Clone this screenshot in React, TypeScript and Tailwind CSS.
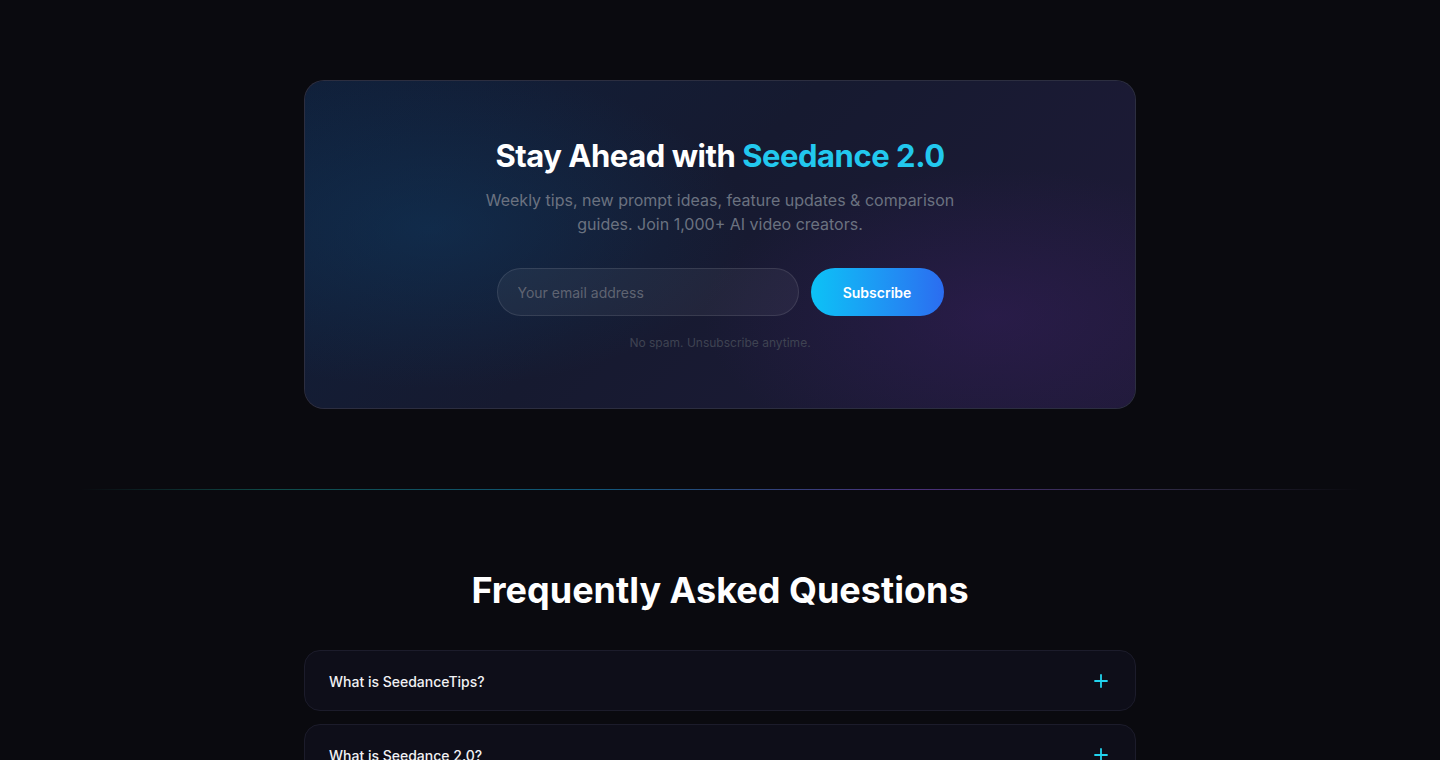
import React from "react";

const faqs = ["What is SeedanceTips?", "What is Seedance 2.0?", "How do I use Seedance prompts?"];

function Plus() {
  return (
    <svg width="14" height="14" viewBox="0 0 14 14" fill="none" className="shrink-0">
      <path d="M7 1v12M1 7h12" stroke="#22d3ee" strokeWidth="1.8" strokeLinecap="round" />
    </svg>
  );
}

export default function App() {
  return (
    <div
      className="min-h-screen bg-[#0a0a0f] text-white"
      style={{ fontFamily: "Inter, 'Noto Sans', sans-serif" }}
    >
      <section className="pt-20 pb-20">
        <div className="relative mx-auto w-[832px] overflow-hidden rounded-[20px] border border-white/10 bg-[#15172b]">
          <div className="pointer-events-none absolute inset-0 bg-[radial-gradient(ellipse_55%_70%_at_15%_45%,rgba(14,60,100,0.45),transparent_70%),radial-gradient(ellipse_50%_65%_at_83%_72%,rgba(60,30,100,0.4),transparent_70%),linear-gradient(135deg,#10203a_0%,#161a30_45%,#1f1a38_100%)]" />
          <div className="relative flex flex-col items-center px-14 pt-[55px] pb-[57px] text-center">
            <h2 className="text-[31px] font-bold leading-10 tracking-[-0.015em]">
              Stay Ahead with <span className="text-[#22c8ee]">Seedance 2.0</span>
            </h2>
            <p className="mt-3 w-[480px] text-[16px] leading-6 text-[#6b7280]">
              Weekly tips, new prompt ideas, feature updates &amp; comparison guides. Join 1,000+ AI video creators.
            </p>
            <div className="mt-8 flex w-[447px] gap-3">
              <input
                placeholder="Your email address"
                className="h-12 flex-1 rounded-full border border-white/10 bg-white/5 px-5 text-[14px] text-white outline-none placeholder:text-[#5f6472]"
              />
              <button className="h-12 w-[133px] rounded-full bg-gradient-to-r from-[#0cc2f6] to-[#2b6cf0] text-[14px] font-semibold text-white">
                Subscribe
              </button>
            </div>
            <p className="mt-[19px] text-[12px] leading-4 text-[#3f4352]">No spam. Unsubscribe anytime.</p>
          </div>
        </div>
      </section>

      <div className="mx-auto h-px w-[1280px] bg-[linear-gradient(90deg,transparent_0%,rgba(20,140,130,0.5)_15%,rgba(20,130,180,0.65)_40%,rgba(110,70,180,0.65)_65%,rgba(90,80,130,0.45)_85%,transparent_100%)]" />

      <section className="pt-20 pb-20">
        <h2 className="text-center text-[36px] font-bold leading-10">Frequently Asked Questions</h2>
        <div className="mx-auto mt-10 flex w-[832px] flex-col gap-[13px]">
          {faqs.map((q) => (
            <div
              key={q}
              className="flex h-[61px] items-center justify-between rounded-2xl border border-[#1c1c2b] bg-[#0e0e19] px-6"
            >
              <span className="pt-[1px] text-[14px] font-medium text-[#f1f1f4]">{q}</span>
              <span className="mr-[3px]"><Plus /></span>
            </div>
          ))}
        </div>
      </section>
    </div>
  );
}
